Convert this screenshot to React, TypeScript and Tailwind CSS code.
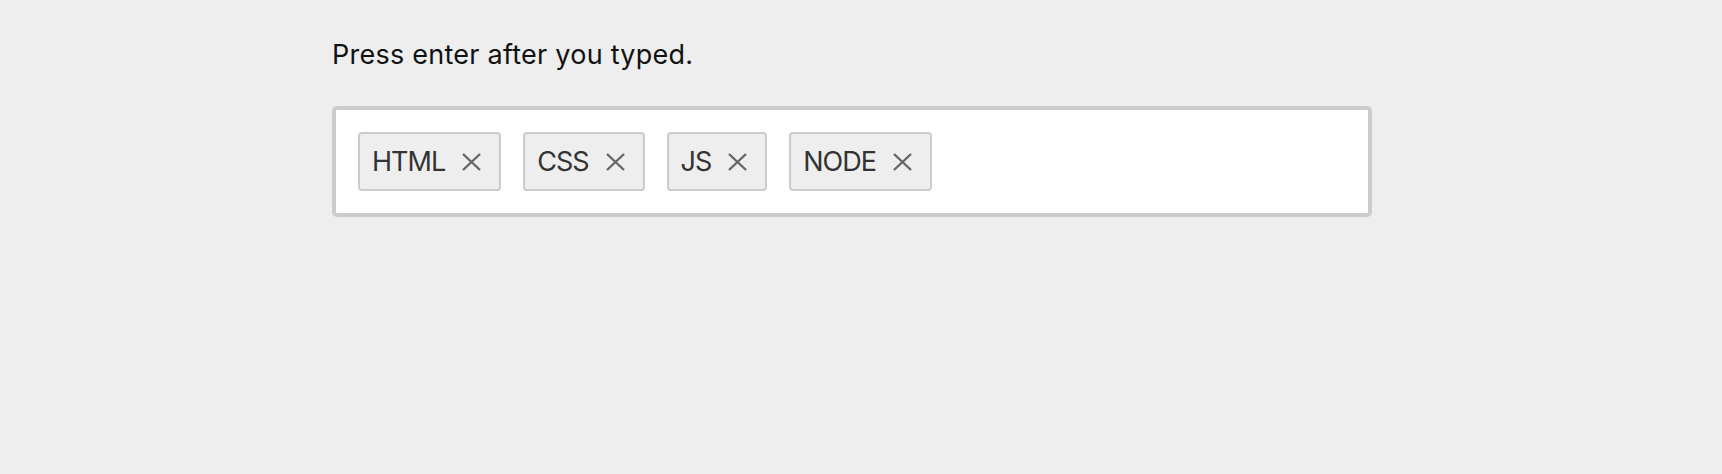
import React from "react";

const tags = ["HTML", "CSS", "JS", "NODE"];

const CloseIcon = () => (
    <svg width="19" height="18" viewBox="0 0 19 18" fill="none" className="shrink-0">
        <path d="M1 1L18 17M18 1L1 17" stroke="#666666" strokeWidth="2.4" />
    </svg>
);

export default function App() {
    return (
        <div className="min-h-screen w-full bg-[#eeeeee] text-[#111] [font-family:Inter,'Liberation_Sans',sans-serif]">
            <div className="w-[1040px] ml-[332px] pt-[35px]">
                <p className="text-[27px] leading-[40px] tracking-[0.25px] text-[#111]">Press enter after you typed.</p>

                <div className="mt-[31px] border-4 border-[#cccccc] rounded-[5px] bg-white p-[22px] flex items-center gap-[22px]">
                    {tags.map((tag) => (
                        <div
                            key={tag}
                            className="h-[59px] flex items-center gap-[17px] pl-[12px] pr-[18px] border-2 border-[#cccccc] rounded-[4px] bg-[#eeeeee] text-[27px] tracking-[-1px] text-[#333]"
                        >
                            <span className="leading-none">{tag}</span>
                            <CloseIcon />
                        </div>
                    ))}
                </div>
            </div>
        </div>
    );
}
